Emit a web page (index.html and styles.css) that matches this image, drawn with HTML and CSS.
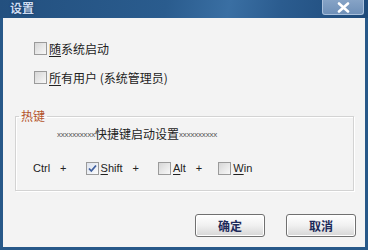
FILE: index.html
```html
<!DOCTYPE html>
<html lang="zh-CN">
<head>
    <meta charset="UTF-8">
    <title>设置</title>
    <link rel="stylesheet" href="styles.css">
</head>
<body>
    <div class="window">
        <div class="titlebar">
            <span class="title">设置</span>
            <button class="close" aria-label="关闭">
                <svg width="13" height="11" viewBox="0 0 13 11">
                    <path d="M2 1.5 L11 9.5 M11 1.5 L2 9.5" stroke="#fff" stroke-width="2.6" stroke-linecap="round"/>
                </svg>
            </button>
        </div>

        <div class="content">
            <label class="option">
                <span class="cb"></span>
                <span><u>随</u>系统启动</span>
            </label>
            <label class="option">
                <span class="cb"></span>
                <span><u>所</u>有用户 (系统管理员)</span>
            </label>

            <fieldset class="group">
                <legend>热键</legend>
                <div class="hint"><span class="dots">xxxxxxxxxx</span>快捷键启动设置<span class="dots">xxxxxxxxxx</span></div>
                <div class="keys">
                    <span class="key">Ctrl</span>
                    <span class="plus">+</span>
                    <label class="key-opt">
                        <span class="cb checked">
                            <svg width="9" height="9" viewBox="0 0 9 9">
                                <path d="M1 4.5 L3.3 7 L8 1.5" fill="none" stroke="#3f5f9f" stroke-width="1.8"/>
                            </svg>
                        </span>
                        <span><u>S</u>hift</span>
                    </label>
                    <span class="plus">+</span>
                    <label class="key-opt">
                        <span class="cb"></span>
                        <span><u>A</u>lt</span>
                    </label>
                    <span class="plus last">+</span>
                    <label class="key-opt">
                        <span class="cb"></span>
                        <span><u>W</u>in</span>
                    </label>
                </div>
            </fieldset>

            <div class="buttons">
                <button class="btn">确定</button>
                <button class="btn">取消</button>
            </div>
        </div>
    </div>
</body>
</html>
```

FILE: styles.css
```css
body {
    margin: 0;
    font-family: "Liberation Sans", "Noto Sans CJK SC", sans-serif;
    font-size: 12px;
    color: #222;
}
.window {
    width: 368px;
    height: 250px;
    box-sizing: border-box;
    border: 3px solid #275888;
    border-top: none;
    display: flex;
    flex-direction: column;
    background: #f3f3f3;
}
.titlebar {
    height: 18px;
    margin: 0 -3px;
    padding-left: 10px;
    display: flex;
    align-items: flex-start;
    justify-content: space-between;
    background: linear-gradient(100deg, #23507f 0%, #2a5c8e 45%, #3a6fa3 62%, #2b5c8f 76%, #1e4a7a 100%);
}
.title {
    font-family: "Noto Sans CJK SC", sans-serif;
    font-weight: bold;
    font-size: 12px;
    line-height: 16px;
    color: #cddcf2;
    text-shadow: 0 0 2px #0c2a50;
}
.close {
    width: 42px;
    height: 15px;
    margin-right: 4px;
    padding: 0;
    border: 1px solid #a9c0dc;
    border-top: none;
    border-radius: 0 0 3px 3px;
    background: linear-gradient(#86a3c6, #6f90b8);
    display: flex;
    align-items: center;
    justify-content: center;
}
.content {
    flex: 1;
    display: flex;
    flex-direction: column;
    padding: 23px 9px 0 12px;
}
.option {
    display: flex;
    align-items: center;
    gap: 2px;
    height: 14px;
    margin-left: 19px;
    margin-bottom: 15px;
    font-family: "Noto Sans CJK SC", sans-serif;
}
.cb {
    flex-shrink: 0;
    width: 11px;
    height: 11px;
    border: 1px solid #9a9a9a;
    background: linear-gradient(135deg, #d6d6d6, #f8f8f8);
    display: flex;
    align-items: center;
    justify-content: center;
}
.cb.checked {
    background: linear-gradient(135deg, #dde3ee, #fbfbfb);
}
u {
    text-decoration-thickness: 1px;
    text-underline-offset: 2px;
}
.group {
    margin: 10px 0 0 0;
    width: 339px;
    box-sizing: border-box;
    height: 82px;
    padding: 4px 0 0 0;
    border: 1px solid #d3d3d3;
    box-shadow: inset 1px 1px 0 #fff, 1px 1px 0 #fff;
}
.group legend {
    margin-left: 3px;
    padding: 0 2px;
    line-height: 14px;
    color: #b4552a;
    font-family: "Noto Sans CJK SC", sans-serif;
}
.hint {
    margin-left: 41px;
    height: 14px;
    line-height: 14px;
    font-family: "Noto Sans CJK SC", sans-serif;
}
.dots {
    font-family: "Liberation Sans", sans-serif;
    font-size: 8px;
    letter-spacing: -0.2px;
    color: #555;
    vertical-align: 2px;
}
.keys {
    display: flex;
    align-items: center;
    height: 14px;
    margin-top: 20px;
    margin-left: 17px;
    font-size: 11px;
}
.plus {
    margin: 0 19px 0 10px;
}
.plus.last {
    margin-right: 16px;
}
.key-opt {
    display: flex;
    align-items: center;
    gap: 2px;
}
.buttons {
    display: flex;
    justify-content: flex-end;
    gap: 21px;
    margin-top: 23px;
}
.btn {
    flex-shrink: 0;
    width: 70px;
    height: 23px;
    padding: 0;
    border: 1px solid #707070;
    border-radius: 3px;
    background: linear-gradient(#ffffff, #f0f0f0 50%, #d6d6d6);
    box-shadow: inset 0 0 0 1px #fff;
    font-family: "Noto Sans CJK SC", sans-serif;
    font-size: 12px;
    font-weight: bold;
    color: #1c2a5a;
}
```
